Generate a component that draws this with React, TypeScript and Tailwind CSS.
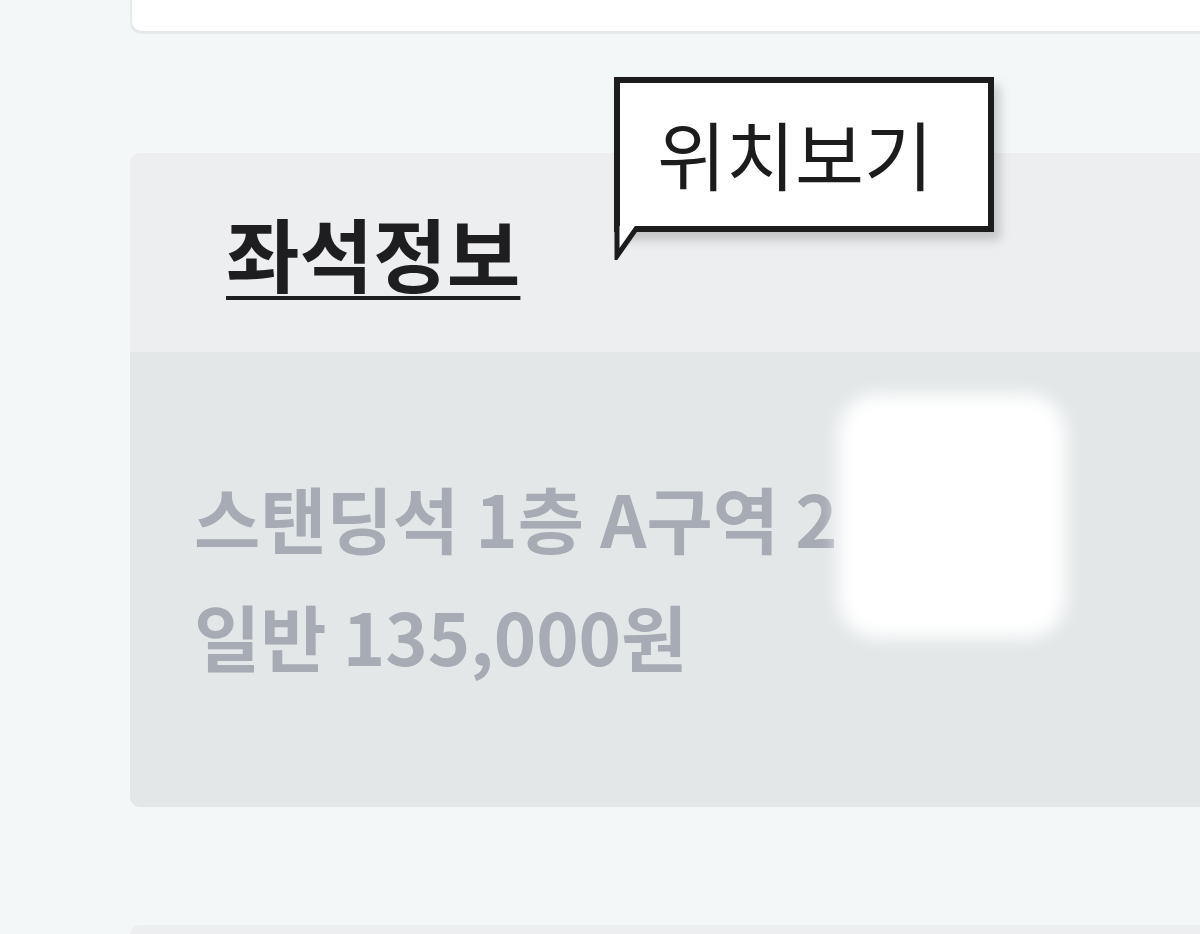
const KR = { fontFamily: '"Noto Sans CJK KR", "Noto Sans", sans-serif' };

export default function App() {
  return (
    <div className="h-[934px] overflow-hidden bg-[#f4f7f8] pl-[130px]" style={KR}>
      {/* top card, cut off by the window */}
      <div className="h-[34px] rounded-bl-[12px] border-b-[3px] border-l-2 border-[#e6e9eb] bg-white" />

      {/* seat info panel */}
      <div className="relative mt-[119px] rounded-l-[10px] bg-[#eceef0]">
        <div className="h-[199px] pl-[96px] pt-[50px]">
          <h2 className="text-[80px] font-bold leading-[96px] text-[#1e1e20] underline decoration-[4px] underline-offset-[10px]">
            좌석정보
          </h2>
        </div>

        {/* speech bubble */}
        <div className="absolute left-[484px] top-[-76px]">
          <div className="relative flex h-[155px] w-[380px] items-center justify-center border-[6px] border-[#1c1c1c] bg-white pr-[18px] shadow-[6px_8px_10px_rgba(0,0,0,0.18)]">
            <span className="pb-[4px] text-[75px] font-normal leading-none text-[#1c1c1c]">위치보기</span>
          </div>
          <svg className="absolute left-0 top-[149px]" width="30" height="34" viewBox="0 0 30 34">
            <polygon points="3,0 24,0 3,29" fill="#ffffff" />
            <polyline points="3,0 3,30 24,0" fill="none" stroke="#1c1c1c" strokeWidth="5" strokeLinejoin="miter" />
          </svg>
        </div>

        <div className="relative flex h-[455px] flex-col rounded-bl-[10px] bg-[#e3e7e8] pl-[64px] pt-[106px] text-[72px] font-bold leading-[118px] text-[#a7abb3]">
          <p>스탠딩석 1층 A구역 2</p>
          <p>일반 135,000원</p>

          {/* blurred cover */}
          <div className="absolute left-[708px] top-[42px] h-[244px] w-[228px] rounded-[40px] bg-white blur-[9px]" />
        </div>
      </div>

      {/* next panel */}
      <div className="mt-[118px] h-[40px] rounded-tl-[10px] bg-[#eceef0]" />
    </div>
  );
}
